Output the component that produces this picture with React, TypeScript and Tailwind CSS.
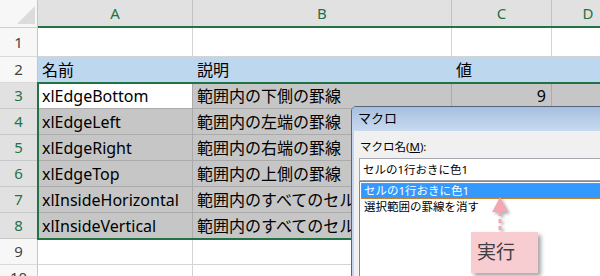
import React from "react";

const rows = [
  { n: 3, a: "xlEdgeBottom", b: "範囲内の下側の罫線", c: "9" },
  { n: 4, a: "xlEdgeLeft", b: "範囲内の左端の罫線", c: "" },
  { n: 5, a: "xlEdgeRight", b: "範囲内の右端の罫線", c: "" },
  { n: 6, a: "xlEdgeTop", b: "範囲内の上側の罫線", c: "" },
  { n: 7, a: "xlInsideHorizontal", b: "範囲内のすべてのセルの内側の横方向の罫線", c: "" },
  { n: 8, a: "xlInsideVertical", b: "範囲内のすべてのセルの内側の縦方向の罫線", c: "" },
];

function RowHead({ n, sel, h }: { n: number; sel?: boolean; h: string }) {
  return (
    <div
      className={`w-[38px] shrink-0 border-r border-b flex items-center justify-center text-[15px] ${h} ${
        sel ? "bg-[#e1e1e1] text-[#217346] border-r-[#bdbdbd] border-b-[#c8c8c8]" : "bg-[#f7f7f7] text-[#444] border-r-[#c6c6c6] border-b-[#dadada]"
      }`}
    >
      {n}
    </div>
  );
}

export default function App() {
  return (
    <div className="relative w-[600px] h-[276px] overflow-hidden bg-white font-['Noto_Sans','Noto_Sans_CJK_JP',sans-serif] text-black">
      {/* column header */}
      <div className="flex h-[28px]">
        <div className="w-[38px] shrink-0 bg-[#f7f7f7] border-r border-b border-r-[#c6c6c6] border-b-[#cfcfcf] relative">
          <svg className="absolute left-0 top-0" width="37" height="27" viewBox="0 0 37 27">
            <polygon points="17,24 35,24 35,6" fill="#dcdcdc" />
          </svg>
        </div>
        <div className="flex flex-1 bg-[#e1e1e1] border-b-2 border-[#217346] text-[#217346] text-[15px]">
          <div className="w-[155px] shrink-0 border-r border-[#c2c2c2] flex items-center justify-center">A</div>
          <div className="w-[259px] shrink-0 border-r border-[#c2c2c2] flex items-center justify-center">B</div>
          <div className="w-[100px] shrink-0 border-r border-[#c2c2c2] flex items-center justify-center">C</div>
          <div className="w-[72px] shrink-0 flex items-center justify-center">D</div>
        </div>
      </div>

      {/* row 1 */}
      <div className="flex h-[29px]">
        <RowHead n={1} h="h-[29px]" />
        <div className="w-[155px] shrink-0 border-r border-b border-[#d4d4d4]" />
        <div className="w-[259px] shrink-0 border-r border-b border-[#d4d4d4]" />
        <div className="w-[100px] shrink-0 border-r border-b border-[#d4d4d4]" />
        <div className="w-[72px] shrink-0 border-b border-[#d4d4d4]" />
      </div>

      {/* row 2 */}
      <div className="flex h-[26px]">
        <RowHead n={2} h="h-[26px]" />
        <div className="flex flex-1 bg-[#bdd7ee] text-[16px] items-center">
          <div className="w-[155px] shrink-0 pl-[4px]">名前</div>
          <div className="w-[259px] shrink-0 pl-[4px]">説明</div>
          <div className="w-[100px] shrink-0 pl-[4px]">値</div>
          <div className="w-[72px] shrink-0" />
        </div>
      </div>

      {/* rows 3-8 */}
      {rows.map((r, i) => (
        <div key={r.n} className="flex h-[26px]">
          <RowHead n={r.n} sel h="h-[26px]" />
          <div
            className={`w-[155px] shrink-0 border-r border-b border-[#ababab] flex items-center pl-[4px] text-[16px] whitespace-nowrap overflow-hidden ${
              i === 0 ? "bg-white" : "bg-[#c6c6c6]"
            }`}
          >
            {r.a}
          </div>
          <div className="w-[259px] shrink-0 border-r border-b border-[#ababab] bg-[#c6c6c6] flex items-center pl-[4px] text-[16px] whitespace-nowrap overflow-hidden">
            {r.b}
          </div>
          <div className="w-[100px] shrink-0 border-r border-b border-[#ababab] bg-[#c6c6c6] flex items-center justify-end pr-[5px] text-[16px]">
            {r.c}
          </div>
          <div className="w-[72px] shrink-0 border-b border-[#ababab] bg-[#c6c6c6]" />
        </div>
      ))}

      {/* rows 9-10 */}
      {[9, 10].map((n) => (
        <div key={n} className="flex h-[26px]">
          <RowHead n={n} h="h-[26px]" />
          <div className="w-[155px] shrink-0 border-r border-b border-[#d4d4d4]" />
          <div className="w-[259px] shrink-0 border-r border-b border-[#d4d4d4]" />
          <div className="w-[100px] shrink-0 border-r border-b border-[#d4d4d4]" />
          <div className="w-[72px] shrink-0 border-b border-[#d4d4d4]" />
        </div>
      ))}

      {/* selection border */}
      <div className="absolute left-[37px] top-[82px] w-[700px] h-[158px] border-2 border-[#217346] pointer-events-none" />

      {/* macro dialog */}
      <div className="absolute left-[351px] top-[106px] w-[320px] h-[220px] border border-[#56657a] rounded-t-[5px] bg-[#c3d6ed] flex flex-col overflow-hidden">
        <div className="h-[24px] shrink-0 bg-gradient-to-b from-[#a6bfdf] to-[#c8daf0] pl-[6px] flex items-center text-[13px] text-black">
          マクロ
        </div>
        <div className="flex-1 ml-[2px] bg-[#f0f0f0] pl-[5px] pt-[8px] flex flex-col">
          <div className="h-[16px] leading-[16px] text-[11.5px] pl-[1px]">
            マクロ名(<span className="underline">M</span>):
          </div>
          <div className="mt-[3px] h-[23px] bg-white border border-[#a3a6ad] flex items-center pl-[3px] text-[11.5px]">
            セルの1行おきに色1
          </div>
          <div className="flex-1 bg-white border border-[#828790] pt-[1px] pl-[1px] text-[11.5px]">
            <div className="h-[16px] leading-[14px] bg-[#3399ff] text-white pl-[2px] border border-dotted border-[#d08a3a]">
              セルの1行おきに色1
            </div>
            <div className="h-[16px] leading-[16px] pl-[3px]">選択範囲の罫線を消す</div>
          </div>
        </div>
      </div>

      {/* callout arrow */}
      <svg
        className="absolute left-[490px] top-[195px] drop-shadow-[2px_2px_1.5px_rgba(0,0,0,0.3)]"
        width="22"
        height="40"
        viewBox="0 0 22 40"
      >
        <polygon points="10,2 2,17 18,17" fill="#f4a7b1" />
        <line x1="10" y1="17" x2="10" y2="38" stroke="#f4a7b1" strokeWidth="3" strokeDasharray="4 3" />
      </svg>

      {/* callout box */}
      <div className="absolute left-[471px] top-[232px] w-[67px] h-[41px] bg-[#f8cdd2] shadow-[3px_3px_4px_rgba(0,0,0,0.35)] flex items-center pl-[6px] text-[19px] text-[#404040]">
        実行
      </div>
    </div>
  );
}
